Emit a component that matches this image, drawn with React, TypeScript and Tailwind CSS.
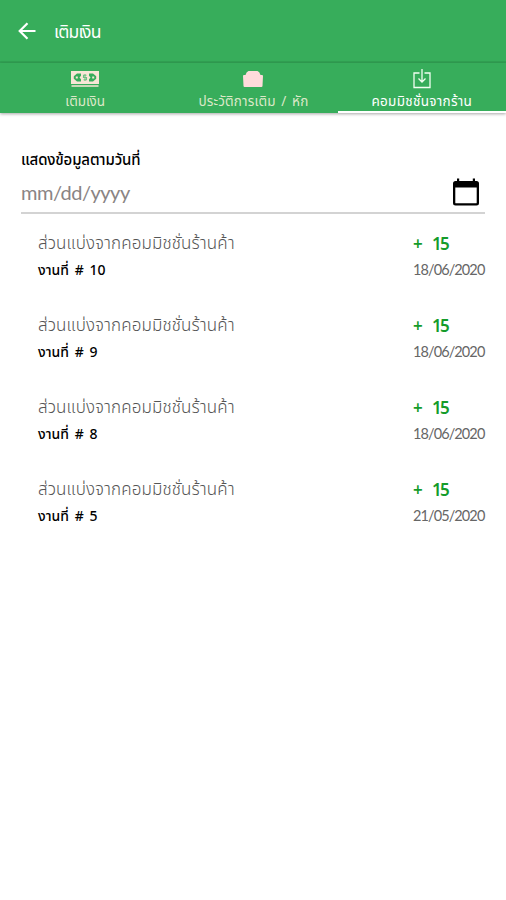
import type { ReactNode } from 'react';

const commissions = [
  { job: '10', amount: 15, date: '18/06/2020' },
  { job: '9', amount: 15, date: '18/06/2020' },
  { job: '8', amount: 15, date: '18/06/2020' },
  { job: '5', amount: 15, date: '21/05/2020' },
];

function BackIcon() {
  return (
    <svg width="18" height="18" viewBox="0 0 18 18" fill="none" stroke="white" strokeWidth="2.2">
      <path d="M17.5 9H2M9.5 1.2 1.7 9l7.8 7.8" />
    </svg>
  );
}

function MoneyIcon() {
  return (
    <svg width="28" height="18" viewBox="0 0 28 18">
      <path fill="#f8e6d6" d="M0 1h28v13H0zM.5 15.2h27v1.6H.5z" />
      <path fill="#37ad5b" d="M6 3.5h4v2.3L8.5 7.5 10 9.2v2.3H6L2.8 8.800V6.200zM22 3.500h-4v2.300l1.500 1.700L18 9.200v2.300h4l3.200-2.700V6.200z" />
      <path fill="#f8e6d6" d="M4.800 6.500h2v2h-2zM21.200 6.500h2v2h-2z" />
      <path stroke="#6fbf83" strokeWidth="1.100" fill="none" d="M15.500 5.300h-3v2.200h3v2.300h-3M14 4v7" />
    </svg>
  );
}

function WalletIcon() {
  return (
    <svg width="20" height="18" viewBox="0 0 20 18">
      <path fill="#ffdbdb" d="M5.500 1h9q2 .5 3 4H19q1 0 1 1L19.500 16q-.1 1-1 1h-17q-.9 0-1-1L0 6q0-1 1-1h1.500q1-3.500 3-4z" />
    </svg>
  );
}

function DownloadIcon() {
  return (
    <svg width="18" height="20" viewBox="0 0 18 20" fill="none" stroke="#f2fff2" strokeWidth="1.300">
      <path d="M6.500 4H1v14.500h16V4h-5.500M9 0v13M5.500 9.500 9 13l3.500-3.500" />
    </svg>
  );
}

function CalendarIcon() {
  return (
    <svg width="26" height="28" viewBox="0 0 26 28">
      <path fill="black" d="M4 .5h2.200V3h13.600V.5H22V3h1.500Q26 3 26 5.500V25q0 2.500-2.500 2.500h-21Q0 27.500 0 25V5.500Q0 3 2.500 3H4z" />
      <path fill="white" d="M2.300 9.500h21.400V24.700q0 .6-.6.600H2.900q-.6 0-.6-.6z" />
    </svg>
  );
}

function Tab({ icon, active, children }: { icon: ReactNode; active?: boolean; children: ReactNode }) {
  return (
    <div
      className={`flex flex-1 flex-col items-center border-b-2 pt-[6px] ${
        active ? 'border-white text-white' : 'border-[#37ad5b] text-[#dce8c8]'
      }`}
    >
      <div className="flex h-5 items-center">{icon}</div>
      <div className="mt-[2px] h-5 text-[13.5px] leading-5 whitespace-nowrap">{children}</div>
    </div>
  );
}

export default function App() {
  return (
    <div className="h-[900px] w-[506px] overflow-hidden bg-white font-['Noto_Sans','Noto_Sans_Thai',sans-serif]">
      <header className="bg-[#37ad5b]">
        <div className="flex h-[63px] items-center gap-[18px] border-b-2 border-[#31a153] pl-[18px]">
          <BackIcon />
          <h1 className="text-[17.5px] leading-6 tracking-[-0.8px] text-white">เติมเงิน</h1>
        </div>
        <nav className="flex h-[50px] pl-px shadow-[0_1px_3px_rgba(0,0,0,0.35)]">
          <Tab icon={<MoneyIcon />}>เติมเงิน</Tab>
          <Tab icon={<WalletIcon />}>
            <span className="tracking-[0.15px] [word-spacing:2px]">ประวัติการเติม / หัก</span>
          </Tab>
          <Tab icon={<DownloadIcon />} active>
            <span className="tracking-[0.3px]">คอมมิชชั่นจากร้าน</span>
          </Tab>
        </nav>
      </header>

      <main className="px-[21px] pt-[34px]">
        <div className="h-6 text-[15px] leading-6 font-medium tracking-[-0.15px] text-black">แสดงข้อมูลตามวันที่</div>
        <div className="flex h-[43px] items-center justify-between border-b-2 border-[#d3d3d3] pr-[6px]">
          <span className="font-['Lato',sans-serif] text-[20px] tracking-[-0.5px] text-[#8a8484]">mm/dd/yyyy</span>
          <CalendarIcon />
        </div>

        <ul className="pl-[17px]">
          {commissions.map(({ job, amount, date }) => (
            <li key={job} className="flex h-[82px] justify-between pt-4">
              <div>
                <div className="h-[26px] text-[17px] leading-[26px] font-light tracking-[0.1px] text-[#555]">
                  ส่วนแบ่งจากคอมมิชชั่นร้านค้า
                </div>
                <div className="h-[26px] text-[14px] leading-[27px] font-medium text-black [word-spacing:2.2px]">
                  งานที่ # {job}
                </div>
              </div>
              <div className="w-[72px] whitespace-nowrap">
                <div className="flex h-[26px] gap-[9px] text-[17px] leading-[27px] font-semibold tracking-[-1.8px] text-[#159c2b]">
                  <span className="w-[10px]">+</span>
                  <span>{amount}</span>
                </div>
                <div className="h-[26px] font-['Lato',sans-serif] text-[14.5px] leading-[27px] tracking-[-0.9px] text-[#666]">
                  {date}
                </div>
              </div>
            </li>
          ))}
        </ul>
      </main>
    </div>
  );
}
